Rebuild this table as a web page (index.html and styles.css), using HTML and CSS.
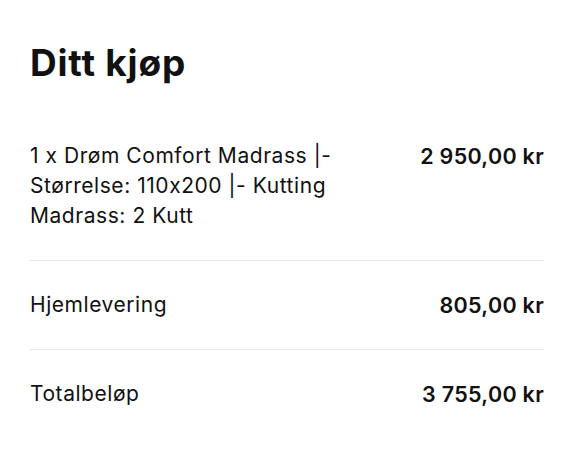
FILE: index.html
```html
<!DOCTYPE html>
<html lang="no">
<head>
<meta charset="utf-8">
<link rel="stylesheet" href="styles.css">
</head>
<body>
<main class="summary">
  <h1 class="title">Ditt kjøp</h1>
  <div class="row row-first">
    <div class="label">1 x Drøm Comfort Madrass |- Størrelse: 110x200 |- Kutting Madrass: 2 Kutt</div>
    <div class="amount">2 950,00 kr</div>
  </div>
  <div class="row">
    <div class="label">Hjemlevering</div>
    <div class="amount">805,00 kr</div>
  </div>
  <div class="row row-last">
    <div class="label">Totalbeløp</div>
    <div class="amount">3 755,00 kr</div>
  </div>
</main>
</body>
</html>
```
FILE: styles.css
```css
html, body {
  margin: 0;
  padding: 0;
  background: #ffffff;
}
body {
  font-family: Inter, "Liberation Sans", sans-serif;
  font-feature-settings: "calt" 0;
  color: #111111;
}
.summary {
  padding: 38px 30px 0 30px;
  width: 514px;
}
.title {
  margin: 0;
  font-size: 37px;
  font-weight: 700;
  line-height: 50px;
  letter-spacing: 0.8px;
}
.row {
  display: flex;
  justify-content: space-between;
  align-items: flex-start;
  padding: 29px 0;
  border-bottom: 1px solid #e6e6e6;
  font-size: 21px;
  line-height: 30px;
}
.row-first {
  margin-top: 24px;
}
.row-last {
  border-bottom: none;
}
.label {
  font-weight: 400;
  max-width: 320px;
  letter-spacing: 0.55px;
}
.amount {
  font-weight: 600;
  font-size: 21.5px;
  letter-spacing: 0.3px;
  white-space: nowrap;
}
```
